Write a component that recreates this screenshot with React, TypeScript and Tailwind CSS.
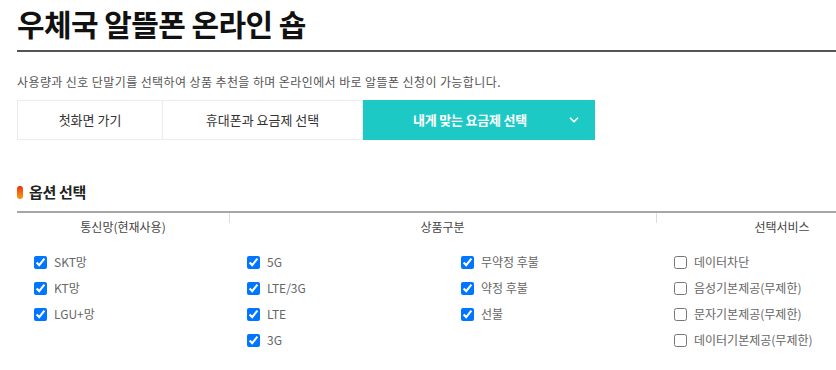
import { ChevronDown } from 'lucide-react'

const KR = '[font-family:"Noto_Sans_CJK_KR","Noto_Sans",sans-serif]'

interface Option {
  label: string
  checked: boolean
}

const network: Option[] = [
  { label: 'SKT망', checked: true },
  { label: 'KT망', checked: true },
  { label: 'LGU+망', checked: true },
]

const productTech: Option[] = [
  { label: '5G', checked: true },
  { label: 'LTE/3G', checked: true },
  { label: 'LTE', checked: true },
  { label: '3G', checked: true },
]

const productPay: Option[] = [
  { label: '무약정 후불', checked: true },
  { label: '약정 후불', checked: true },
  { label: '선불', checked: true },
]

const services: Option[] = [
  { label: '데이터차단', checked: false },
  { label: '음성기본제공(무제한)', checked: false },
  { label: '문자기본제공(무제한)', checked: false },
  { label: '데이터기본제공(무제한)', checked: false },
]

function CheckList({ items }: { items: Option[] }) {
  return (
    <ul className="flex flex-col gap-[12px]">
      {items.map((item) => (
        <li key={item.label} className="flex items-center h-[14px]">
          <input
            type="checkbox"
            defaultChecked={item.checked}
            className="w-[13px] h-[13px] m-0 shrink-0"
          />
          <span className="ml-[7px] text-[12px] text-[#666] leading-none">{item.label}</span>
        </li>
      ))}
    </ul>
  )
}

export default function App() {
  return (
    <div className={`overflow-hidden w-[836px] h-[370px] bg-white ${KR}`}>
      <div className="w-[920px] pl-[17px]">
        {/* title */}
        <div className="pt-[5px] pb-[8px] border-b-2 border-[#555]">
          <h1 className="text-[30px] font-bold leading-[37px] tracking-[-0.6px] text-[#111]">
            우체국 알뜰폰 온라인 숍
          </h1>
        </div>

        <p className="mt-[22px] text-[12px] leading-[16px] text-[#555] tracking-[0.4px]">
          사용량과 신호 단말기를 선택하여 상품 추천을 하며 온라인에서 바로 알뜰폰 신청이 가능합니다.
        </p>

        {/* step tabs */}
        <div className="mt-[10px] flex h-[40px]">
          <div className="w-[146px] flex items-center justify-center border border-[#ececec] text-[13px] text-[#333]">
            첫화면 가기
          </div>
          <div className="w-[200px] flex items-center justify-center border border-l-0 border-[#ececec] text-[13px] text-[#333]">
            휴대폰과 요금제 선택
          </div>
          <div className="w-[232px] flex items-center bg-[#1dc9c4] text-white pl-[50px] pr-[14px]">
            <span className="text-[13px] font-bold tracking-[-0.2px]">내게 맞는 요금제 선택</span>
            <ChevronDown className="ml-auto w-[14px] h-[14px]" strokeWidth={3} />
          </div>
        </div>

        {/* option section */}
        <div className="mt-[42px] flex items-center gap-[6px] h-[20px]">
          <span className="w-[6px] h-[13px] rounded-full bg-gradient-to-b from-[#f0200a] to-[#f59a10]" />
          <h2 className="text-[15px] font-bold tracking-[-0.3px] text-[#222]">옵션 선택</h2>
        </div>

        <div className="mt-[9px] border-t-2 border-[#a6a6a6] flex">
          <div className="w-[212px]">
            <div className="h-[28px] flex items-center justify-center text-[12px] text-[#444]">
              통신망(현재사용)
            </div>
            <div className="pt-[14px] pl-[17px]">
              <CheckList items={network} />
            </div>
          </div>

          <div className="w-[427px] relative">
            <div className="absolute left-0 top-0 h-[10px] border-l border-[#ddd]" />
            <div className="h-[28px] flex items-center justify-center text-[12px] text-[#444]">
              상품구분
            </div>
            <div className="pt-[14px] pl-[18px] flex">
              <div className="w-[214px]">
                <CheckList items={productTech} />
              </div>
              <div>
                <CheckList items={productPay} />
              </div>
            </div>
          </div>

          <div className="w-[252px] relative">
            <div className="absolute left-0 top-0 h-[10px] border-l border-[#ddd]" />
            <div className="h-[28px] flex items-center justify-center text-[12px] text-[#444]">
              선택서비스
            </div>
            <div className="pt-[14px] pl-[18px]">
              <CheckList items={services} />
            </div>
          </div>
        </div>
      </div>
    </div>
  )
}
